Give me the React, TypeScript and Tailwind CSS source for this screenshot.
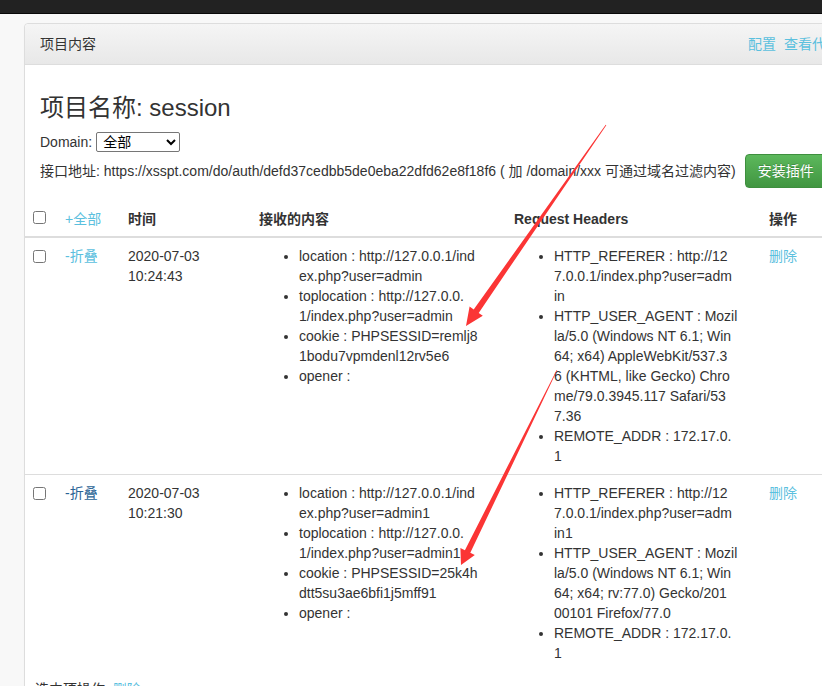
import React from "react";

const font = { fontFamily: '"Liberation Sans", Arial, "Noto Sans CJK SC", sans-serif' };

interface Record {
    time: string[];
    folded: string;
    foldColor: string;
    content: string[][];
    headers: string[][];
}

// lines are split where the original page wraps them
const records: Record[] = [
    {
        time: ["2020-07-03", "10:24:43"],
        folded: "-折叠",
        foldColor: "text-[#5bc0de]",
        content: [
            ["location : http://127.0.0.1/ind", "ex.php?user=admin"],
            ["toplocation : http://127.0.0.", "1/index.php?user=admin"],
            ["cookie : PHPSESSID=remlj8", "1bodu7vpmdenl12rv5e6"],
            ["opener :"],
        ],
        headers: [
            ["HTTP_REFERER : http://12", "7.0.0.1/index.php?user=adm", "in"],
            [
                "HTTP_USER_AGENT : Mozil",
                "la/5.0 (Windows NT 6.1; Win",
                "64; x64) AppleWebKit/537.3",
                "6 (KHTML, like Gecko) Chro",
                "me/79.0.3945.117 Safari/53",
                "7.36",
            ],
            ["REMOTE_ADDR : 172.17.0.", "1"],
        ],
    },
    {
        time: ["2020-07-03", "10:21:30"],
        folded: "-折叠",
        foldColor: "text-[#2a6496]",
        content: [
            ["location : http://127.0.0.1/ind", "ex.php?user=admin1"],
            ["toplocation : http://127.0.0.", "1/index.php?user=admin1"],
            ["cookie : PHPSESSID=25k4h", "dtt5su3ae6bfi1j5mff91"],
            ["opener :"],
        ],
        headers: [
            ["HTTP_REFERER : http://12", "7.0.0.1/index.php?user=adm", "in1"],
            [
                "HTTP_USER_AGENT : Mozil",
                "la/5.0 (Windows NT 6.1; Win",
                "64; x64; rv:77.0) Gecko/201",
                "00101 Firefox/77.0",
            ],
            ["REMOTE_ADDR : 172.17.0.", "1"],
        ],
    },
];

function InfoList({ items }: { items: string[][] }) {
    return (
        <ul className="list-disc pl-[40px] m-0">
            {items.map((lines) => (
                <li key={lines[0]} className="whitespace-nowrap leading-[20px]">
                    {lines.map((line, i) => (
                        <React.Fragment key={i}>
                            {i > 0 && <br />}
                            {line}
                        </React.Fragment>
                    ))}
                </li>
            ))}
        </ul>
    );
}

function Arrows() {
    // red annotation arrows drawn over the screenshot
    return (
        <svg className="absolute left-0 top-0 pointer-events-none" width="822" height="686">
            <polygon
                fill="#fb3535"
                points="606.3,125.2 478.7,312.9 482.8,315.8 466,326 469.6,306.6 473.7,309.5 605.7,124.8"
            />
            <polygon
                fill="#fb3535"
                points="557.3,370.1 470.3,552.8 474.8,555 461,565 460.4,548 464.9,550.2 556.7,369.9"
            />
        </svg>
    );
}

export default function App() {
    return (
        <div className="relative h-[686px] w-[822px] overflow-hidden bg-[#f8f8f8] text-[14px] text-[#333]" style={font}>
            {/* Top navbar */}
            <div className="h-[14px] bg-[#222] border-b border-[#080808]" />

            <div className="pt-[9px] pl-[24px]">
                <div className="w-[832px] rounded-[4px] border border-[#ddd] bg-white shadow-[0_1px_1px_rgba(0,0,0,0.05)]">
                    {/* Panel heading */}
                    <div className="flex items-center h-[41px] px-[15px] rounded-t-[4px] border-b border-[#ddd] bg-gradient-to-b from-[#f5f5f5] to-[#e8e8e8]">
                        <span className="leading-[20px]">项目内容</span>
                        <div className="ml-auto flex gap-[8px] text-[#5bc0de]">
                            <a>配置</a>
                            <a>查看代码</a>
                        </div>
                    </div>

                    {/* Panel body */}
                    <div className="px-[15px] pt-[15px]">
                        <h3 className="mt-[15px] mb-[10px] text-[24px] leading-[26px] font-normal">项目名称: session</h3>
                        <div className="flex items-center gap-[4px] h-[22px]">
                            <span>Domain:</span>
                            <select className="w-[84px] h-[20px] border border-[#767676] rounded-[2px] bg-white text-black text-[14px] leading-[18px] pl-[2px]">
                                <option>全部</option>
                            </select>
                        </div>
                        <div className="flex items-center gap-[9px] h-[34px] mt-[1px]">
                            <span>
                                接口地址: https://xsspt.com/do/auth/defd37cedbb5de0eba22dfd62e8f18f6 ( 加 /domain/xxx 可通过域名过滤内容)
                            </span>
                            <button className="shrink-0 h-[34px] px-[12px] rounded-[4px] border border-[#3e8f3e] bg-gradient-to-b from-[#5cb85c] to-[#419641] text-white leading-[20px] [text-shadow:0_-1px_0_rgba(0,0,0,0.2)]">
                                安装插件
                            </button>
                        </div>
                    </div>

                    {/* Records table */}
                    <table className="mt-[13px] w-full table-fixed border-collapse">
                        <thead>
                            <tr className="text-left font-bold">
                                <th className="w-[32px] px-[8px] pt-[8px] pb-[7px] align-top border-b-2 border-[#ddd]">
                                    <input type="checkbox" className="block w-[13px] h-[13px] mt-[2px]" />
                                </th>
                                <th className="w-[63px] px-[8px] pt-[8px] pb-[7px] font-normal text-[#5bc0de] border-b-2 border-[#ddd] leading-[20px]">+全部</th>
                                <th className="w-[131px] px-[8px] pt-[8px] pb-[7px] border-b-2 border-[#ddd] leading-[20px]">时间</th>
                                <th className="w-[255px] px-[8px] pt-[8px] pb-[7px] border-b-2 border-[#ddd] leading-[20px]">接收的内容</th>
                                <th className="w-[255px] px-[8px] pt-[8px] pb-[7px] border-b-2 border-[#ddd] leading-[20px]">Request Headers</th>
                                <th className="px-[8px] pt-[8px] pb-[7px] border-b-2 border-[#ddd] leading-[20px]">操作</th>
                            </tr>
                        </thead>
                        <tbody>
                            {records.map((r, i) => (
                                <tr key={r.time[1]} className={i > 0 ? "border-t border-[#ddd]" : ""}>
                                    <td className="p-[8px] align-top">
                                        <input type="checkbox" className="block w-[13px] h-[13px] mt-[4px]" />
                                    </td>
                                    <td className={`p-[8px] align-top leading-[20px] ${r.foldColor}`}>{r.folded}</td>
                                    <td className="p-[8px] align-top leading-[20px]">
                                        {r.time[0]}
                                        <br />
                                        {r.time[1]}
                                    </td>
                                    <td className="p-[8px] align-top">
                                        <InfoList items={r.content} />
                                    </td>
                                    <td className="p-[8px] align-top">
                                        <InfoList items={r.headers} />
                                    </td>
                                    <td className="p-[8px] align-top leading-[20px] text-[#5bc0de]">删除</td>
                                </tr>
                            ))}
                        </tbody>
                    </table>

                    <div className="px-[10px] pt-[8px] leading-[20px]">
                        选中项操作: <a className="text-[#5bc0de]">删除</a>
                    </div>
                </div>
            </div>

            <Arrows />
        </div>
    );
}
